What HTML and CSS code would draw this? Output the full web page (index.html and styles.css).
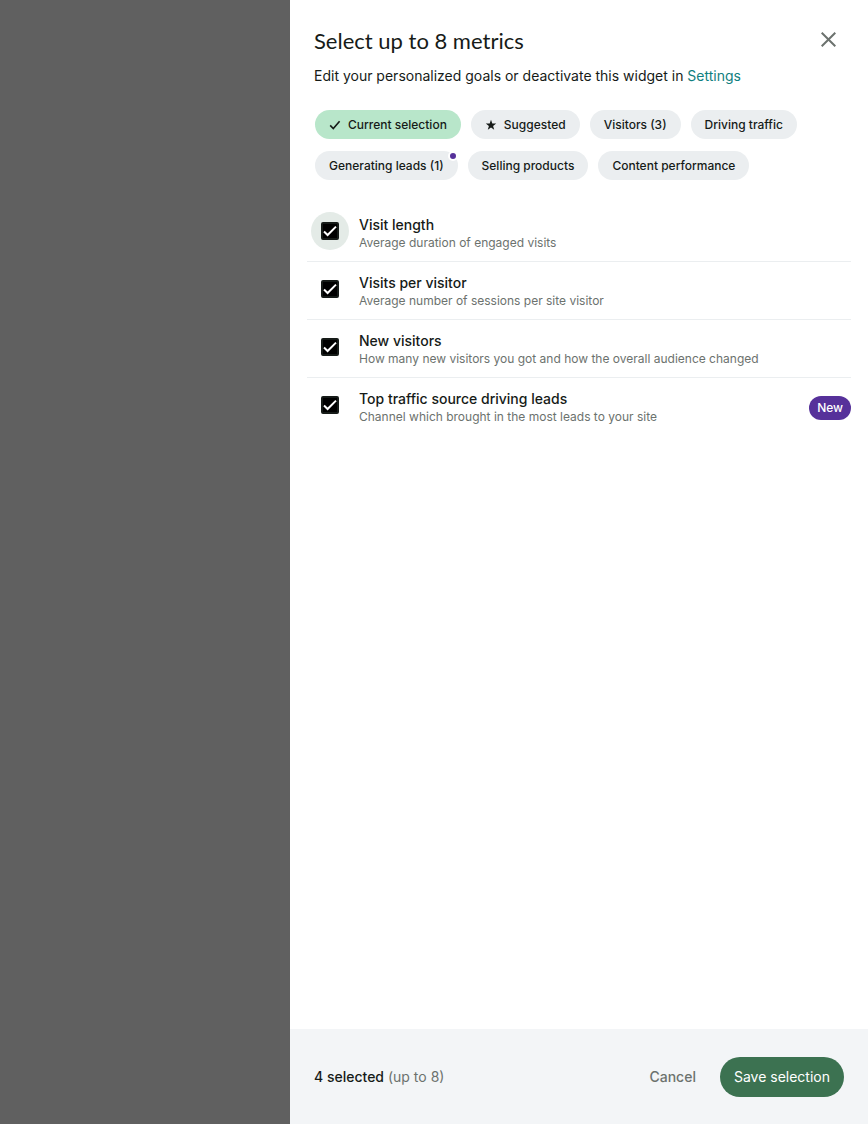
FILE: index.html
```html
<!DOCTYPE html>
<html lang="en">
<head>
<meta charset="utf-8">
<meta name="viewport" content="width=device-width, initial-scale=1">
<title>Select metrics</title>
<link rel="stylesheet" href="styles.css">
</head>
<body>
<div class="overlay">
  <section class="panel" role="dialog" aria-labelledby="panel-title">
    <header class="header">
      <div class="title-row">
        <h1 class="title" id="panel-title">Select up to 8 metrics</h1>
        <button class="close" type="button" aria-label="Close">
          <svg width="15" height="15" viewBox="0 0 15 15" fill="none" stroke="currentColor" stroke-width="2"><path d="M0.7 0.7L14.3 14.3M14.3 0.7L0.7 14.3"/></svg>
        </button>
      </div>
      <p class="subtitle">Edit your personalized goals or deactivate this widget in <a class="link" href="#settings">Settings</a></p>
    </header>
    <nav class="chips" aria-label="Metric groups">
      <button class="chip chip-active" type="button"><svg class="chip-icon" width="12" height="12" viewBox="0 0 12 12" fill="none" stroke="currentColor" stroke-width="1.6"><path d="M1.2 6.4L4.3 9.5L10.6 2.2"/></svg>Current selection</button>
      <button class="chip" type="button"><svg class="chip-icon" width="12" height="12" viewBox="0 0 12 12" fill="currentColor"><path d="M6 0.8L7.3 4.5H11.2L8.1 6.9L9.2 10.8L6 8.5L2.8 10.8L3.9 6.9L0.8 4.5H4.7Z"/></svg>Suggested</button>
      <button class="chip" type="button">Visitors (3)</button>
      <button class="chip" type="button">Driving traffic</button>
      <button class="chip" type="button">Generating leads (1)<span class="dot"></span></button>
      <button class="chip" type="button">Selling products</button>
      <button class="chip" type="button">Content performance</button>
    </nav>
    <ul class="metrics">
      <li class="metric">
        <span class="check check-focus"><input class="box" type="checkbox" id="length" checked></span>
        <label class="text" for="length"><span class="name">Visit length</span><span class="detail">Average duration of engaged visits</span></label>
      </li>
      <li class="metric">
        <span class="check"><input class="box" type="checkbox" id="visits" checked></span>
        <label class="text" for="visits"><span class="name">Visits per visitor</span><span class="detail">Average number of sessions per site visitor</span></label>
      </li>
      <li class="metric">
        <span class="check"><input class="box" type="checkbox" id="visitors" checked></span>
        <label class="text" for="visitors"><span class="name">New visitors</span><span class="detail">How many new visitors you got and how the overall audience changed</span></label>
      </li>
      <li class="metric">
        <span class="check"><input class="box" type="checkbox" id="source" checked></span>
        <label class="text" for="source"><span class="name">Top traffic source driving leads</span><span class="detail">Channel which brought in the most leads to your site</span></label>
        <span class="badge">New</span>
      </li>
    </ul>
    <footer class="footer">
      <p class="count"><strong class="count-number">4 selected</strong> (up to 8)</p>
      <button class="cancel" type="button">Cancel</button>
      <button class="save" type="button">Save selection</button>
    </footer>
  </section>
</div>
</body>
</html>
```
FILE: styles.css
```css
* { box-sizing: border-box; }
body {
  margin: 0;
  font-family: Inter, Roboto, sans-serif;
  font-size: 14px;
  line-height: 20px;
  color: #161b18;
}
button { font: inherit; color: inherit; border: 0; background: none; cursor: pointer; }
h1, p, ul { margin: 0; padding: 0; }
.overlay {
  display: grid;
  grid-template-columns: 1fr minmax(0, 578px);
  min-height: 100vh;
  background: #606060;
}
.panel {
  grid-column: 2;
  display: flex;
  flex-direction: column;
  background: #fff;
}
.header { padding: 24px 24px 0; }
.title-row { display: flex; justify-content: space-between; align-items: flex-start; }
.title { font: 400 22px/34px Lato, sans-serif; }
.close { display: flex; padding: 8px; color: #6c726e; }
.subtitle { margin-top: 8px; }
.link { color: #108080; text-decoration: none; }
.chips {
  display: flex;
  flex-wrap: wrap;
  gap: 12px 10px;
  padding: 24px 25px 0;
}
.chip {
  position: relative;
  display: flex;
  align-items: center;
  gap: 7px;
  height: 29px;
  padding: 0 14px;
  border-radius: 15px;
  background: #ebeef0;
  font-size: 12px;
  font-weight: 500;
}
.chip-active { background: #b8e6ca; }
.dot {
  position: absolute;
  top: 0;
  right: 0;
  width: 10px;
  height: 10px;
  border: 2px solid #fff;
  border-radius: 50%;
  background: #56319a;
}
.metrics { flex: 1; padding: 24px 17px 0; list-style: none; }
.metric { display: flex; align-items: flex-start; gap: 10px; padding: 12px 0 10px; }
.metric + .metric { border-top: 1px solid #ebeef0; }
.check {
  display: flex;
  flex: none;
  align-items: center;
  justify-content: center;
  width: 38px;
  height: 38px;
  margin: -4px 0 0 4px;
  border-radius: 50%;
}
.check-focus { background: #e4ebe7; }
.box {
  appearance: none;
  width: 18px;
  height: 18px;
  margin: 0;
  border: 2px solid #161b18;
  border-radius: 2px;
  background: #000 url("data:image/svg+xml,%3Csvg xmlns='http://www.w3.org/2000/svg' viewBox='0 0 14 14'%3E%3Cpath d='M1 7.5L4.6 11L13 2.6' fill='none' stroke='white' stroke-width='2'/%3E%3C/svg%3E") center / 14px 14px no-repeat;
}
.text { flex: 1; }
.name, .detail { display: block; }
.name { line-height: 18px; font-weight: 500; }
.detail { font-size: 12px; line-height: 17px; color: #6c726e; }
.badge {
  align-self: center;
  padding: 2px 8px;
  border-radius: 12px;
  background: #56319a;
  color: #fff;
  font-size: 12px;
  font-weight: 500;
}
.footer {
  display: flex;
  align-items: center;
  gap: 10px;
  padding: 28px 24px 27px;
  background: #f3f5f7;
}
.count { flex: 1; color: #6c726e; }
.count-number { font-weight: 500; color: #161b18; }
.cancel, .save { padding: 10px 14px; }
.cancel { color: #6c726e; font-weight: 500; }
.save {
  border-radius: 20px;
  background: #3c7251;
  color: #fff;
}
```
